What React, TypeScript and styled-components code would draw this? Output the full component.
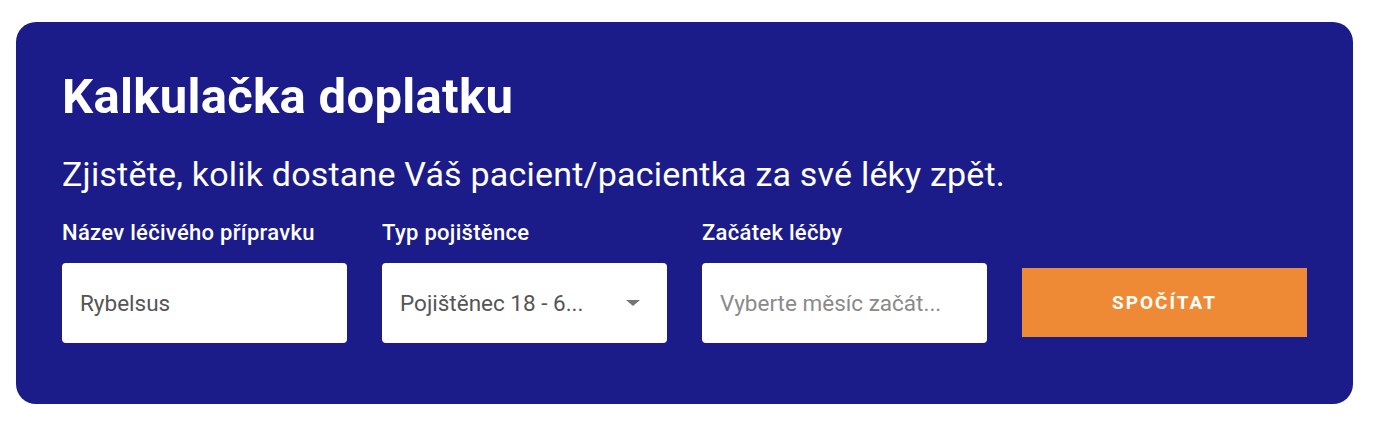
import React from "react";
import styled, { createGlobalStyle } from "styled-components";

const Global = createGlobalStyle`
  * { box-sizing: border-box; }
  html, body { margin: 0; padding: 0; background: #ffffff; }
  body { font-family: Roboto, "Noto Sans", Arial, sans-serif; }
`;

const Page = styled.div`
  padding: 22px 27px 0 16px;
`;

const Card = styled.section`
  background: #1b1c8a;
  border-radius: 20px;
  padding: 46px 46px 61px 46px;
  color: #ffffff;
`;

const Title = styled.h1`
  margin: 0;
  font-family: Roboto, sans-serif;
  font-weight: 700;
  font-size: 49px;
  line-height: 58px;
  letter-spacing: 0.3px;
`;

const Subtitle = styled.p`
  margin: 28px 0 0 0;
  font-family: Roboto, sans-serif;
  font-weight: 400;
  font-size: 34px;
  line-height: 40px;
  letter-spacing: 0.2px;
`;

const Row = styled.div`
  display: grid;
  grid-template-columns: repeat(4, 285px);
  column-gap: 35px;
  align-items: end;
  margin-top: 26px;
`;

const Field = styled.div`
  display: flex;
  flex-direction: column;
`;

const Label = styled.label`
  font-family: Roboto, sans-serif;
  font-weight: 500;
  font-size: 22px;
  line-height: 26px;
  letter-spacing: 0.3px;
  margin-bottom: 17px;
  white-space: nowrap;
`;

const Box = styled.div<{ $placeholder?: boolean }>`
  height: 80px;
  background: #ffffff;
  border-radius: 4px;
  display: flex;
  align-items: center;
  padding: 0 18px;
  font-family: Roboto, sans-serif;
  font-size: 22.5px;
  color: ${(p) => (p.$placeholder ? "#8a8a8a" : "#555555")};
  white-space: nowrap;
`;

const Value = styled.span`
  flex: 1;
  overflow: hidden;
  text-overflow: ellipsis;
`;

const Caret = styled.span`
  width: 0;
  height: 0;
  border-left: 7px solid transparent;
  border-right: 7px solid transparent;
  border-top: 6px solid #757575;
  margin-right: 9px;
  margin-left: 20px;
`;

const Button = styled.button`
  height: 69px;
  margin-bottom: 6px;
  border: none;
  border-radius: 0;
  background: #ee8a35;
  color: #ffffff;
  font-family: Roboto, sans-serif;
  font-weight: 700;
  font-size: 19px;
  letter-spacing: 2px;
  text-transform: uppercase;
  cursor: pointer;
`;

export default function App() {
  return (
    <>
      <Global />
      <Page>
        <Card>
          <Title>Kalkulačka doplatku</Title>
          <Subtitle>Zjistěte, kolik dostane Váš pacient/pacientka za své léky zpět.</Subtitle>
          <Row>
            <Field>
              <Label>Název léčivého přípravku</Label>
              <Box>
                <Value>Rybelsus</Value>
              </Box>
            </Field>
            <Field>
              <Label>Typ pojištěnce</Label>
              <Box>
                <Value>Pojištěnec 18 - 6...</Value>
                <Caret />
              </Box>
            </Field>
            <Field>
              <Label>Začátek léčby</Label>
              <Box $placeholder>
                <Value>Vyberte měsíc začát...</Value>
              </Box>
            </Field>
            <Button>Spočítat</Button>
          </Row>
        </Card>
      </Page>
    </>
  );
}
